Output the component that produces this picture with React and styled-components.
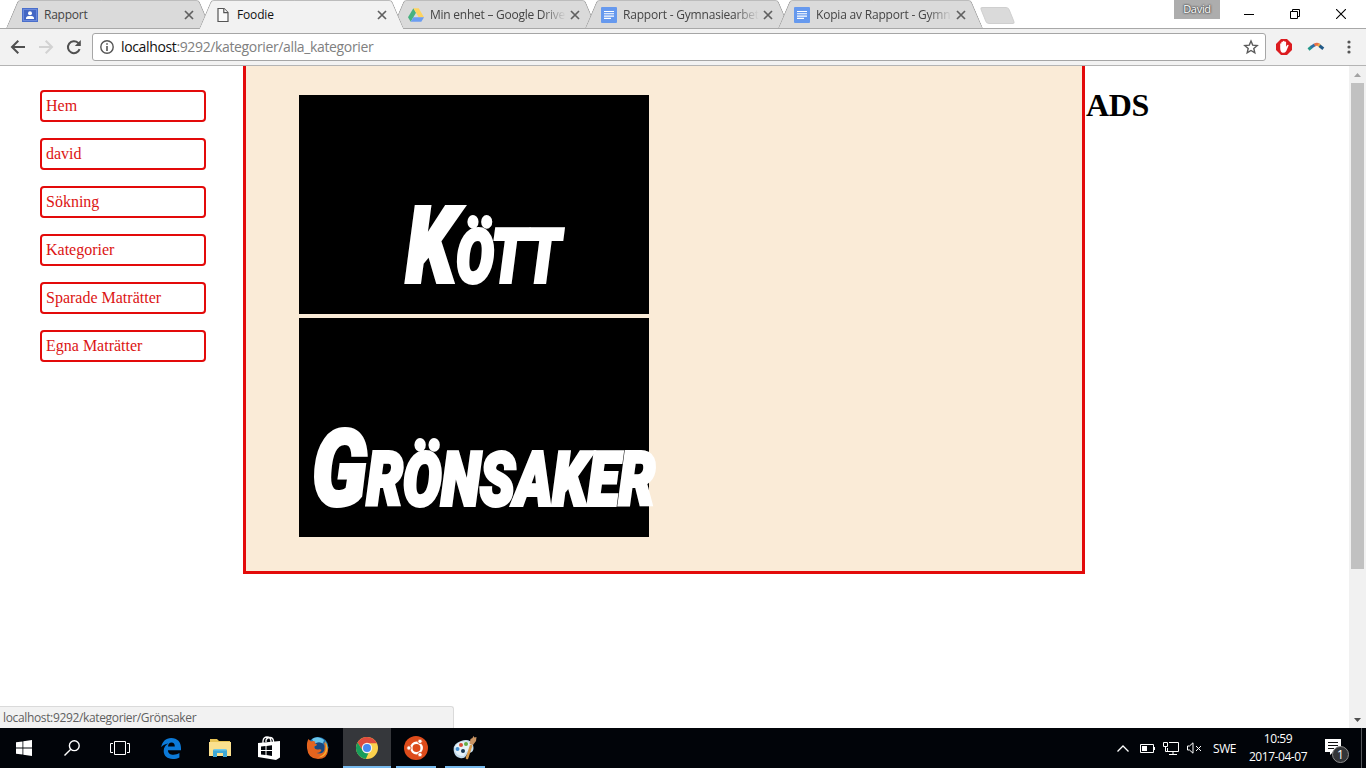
import React from "react";
import styled, { createGlobalStyle, css } from "styled-components";

const Global = createGlobalStyle`
  *, *::before, *::after { box-sizing: border-box; }
  html, body { margin: 0; padding: 0; background: #fff; overflow: hidden; }
  svg { display: block; flex: none; }
`;

const UI = `"Open Sans", "Noto Sans", sans-serif`;

const Screen = styled.div`
  width: 1366px;
  height: 768px;
  display: flex;
  flex-direction: column;
  font-family: ${UI};
  overflow: hidden;
`;

/* ---------- browser frame ---------- */

const TabStrip = styled.header`
  flex: none;
  height: 28px;
  display: flex;
  padding-left: 6px;
  background: #fff;
`;

const tabSide = css`
  content: "";
  position: absolute;
  top: 0;
  z-index: -1;
  width: 55%;
  height: ${(p) => (p.$active ? 29 : 28)}px;
  background: ${(p) => (p.$active ? "#f2f2f2" : "#dadada")};
  border-top: 1px solid #bcbcbc;
`;

const TabShape = styled.div`
  position: relative;
  isolation: isolate;
  z-index: ${(p) => (p.$active ? 3 : 1)};
  flex: none;
  width: 205px;
  height: 28px;
  margin-right: -12px;
  padding: 1px 17px 0 16px;
  display: flex;
  align-items: center;
  &::before {
    ${tabSide}
    left: 6px;
    border-left: 1px solid #a0a0a0;
    border-top-left-radius: 3px;
    transform: skewX(-23deg);
  }
  &::after {
    ${tabSide}
    right: 6px;
    width: 48%;
    border-right: 1px solid #a0a0a0;
    border-top-right-radius: 3px;
    transform: skewX(23deg);
  }
`;

const TabTitle = styled.span`
  flex: 1;
  min-width: 0;
  margin: 0 4px 0 6px;
  white-space: nowrap;
  font-size: 12px;
  line-height: 18px;
  letter-spacing: ${(p) => p.$spacing || 0}px;
  color: ${(p) => (p.$active ? "#111" : "#444")};
  ${(p) => p.$fade && css`
    mask-image: linear-gradient(to right, #000 82%, transparent 100%);
  `}
`;

const NewTab = styled.div`
  width: 29px;
  height: 17px;
  margin: 7px 0 0 12px;
  border: 1px solid #cfcfcf;
  border-radius: 3px;
  background: #dadada;
  transform: skewX(22deg);
`;

const WindowControls = styled.div`
  margin-left: auto;
  padding-right: 2px;
  display: flex;
  align-items: flex-start;
`;

const UserBadge = styled.div`
  width: 46px;
  height: 19px;
  margin-right: 6px;
  background: #adadad;
  color: #fff;
  font-size: 11px;
  line-height: 18px;
  text-align: center;
  letter-spacing: -0.3px;
  text-shadow: 0 0 2px #333, 0 0 2px #333;
`;

const ControlButton = styled.div`
  width: 46px;
  height: 27px;
  display: flex;
  align-items: center;
  justify-content: center;
`;

const Toolbar = styled.div`
  flex: none;
  height: 38px;
  display: flex;
  align-items: center;
  padding: 0 0 1px 10px;
  background: #f2f2f2;
  border-top: 1px solid #a8a8a8;
  border-bottom: 1px solid #b4b4b4;
`;

const NavIcons = styled.div`
  display: flex;
  width: 82px;
  gap: 12px;
`;

const AddressBar = styled.div`
  width: 1174px;
  height: 28px;
  display: flex;
  align-items: center;
  padding: 0 6px 0 7px;
  background: #fff;
  border: 1px solid #a6a6a6;
  border-radius: 3px;
`;

const Url = styled.div`
  flex: 1;
  padding-left: 7px;
  font-size: 14px;
  line-height: 20px;
  letter-spacing: -0.36px;
  color: #808080;
  b { font-weight: 400; color: #111; }
`;

const Extensions = styled.div`
  flex: 1;
  display: flex;
  align-items: center;
  padding-left: 10px;
  & > :nth-child(2) { margin: 0 22px 0 15px; }
`;

/* ---------- web page ---------- */

const Viewport = styled.div`
  flex: 1;
  min-height: 0;
  position: relative;
  display: flex;
  background: #fff;
  font-family: "Liberation Serif", serif;
`;

const Sidebar = styled.nav`
  width: 243px;
  padding: 24px 37px 0 40px;
  display: flex;
  flex-direction: column;
  gap: 16px;
`;

const NavItem = styled.a`
  height: 32px;
  padding: 0 4px;
  border: 2px solid #e30a0a;
  border-radius: 4px;
  color: #dc1414;
  font-size: 16px;
  line-height: 28px;
`;

const Content = styled.main`
  width: 842px;
  height: 508px;
  padding: 29px 53px 0;
  display: flex;
  flex-direction: column;
  gap: 4px;
  background: #faebd7;
  border: 3px solid #e30a0a;
  border-top: 0;
`;

const Category = styled.a`
  width: 350px;
  height: 219px;
  display: flex;
  align-items: flex-start;
  padding: ${(p) => p.$top}px 0 0 ${(p) => p.$left}px;
  background: #000;
`;

const CategoryName = styled.div`
  flex: none;
  font-family: Roboto, sans-serif;
  font-weight: 900;
  font-style: italic;
  font-size: 73px;
  line-height: 100px;
  text-transform: uppercase;
  white-space: nowrap;
  color: #fff;
  -webkit-text-stroke: 4px #fff;
  transform-origin: 0 0;
  transform: scaleX(${(p) => p.$scale});
  &::first-letter { font-size: 106px; line-height: 100px; }
`;

const Ads = styled.h1`
  flex: 1;
  margin: 21px 0 0 1px;
  font-size: 32px;
  line-height: 37px;
  letter-spacing: -0.3px;
  color: #000;
`;

const Scrollbar = styled.div`
  width: 17px;
  display: flex;
  flex-direction: column;
  align-items: center;
  background: #f1f1f1;
`;

const ScrollArrow = styled.div`
  height: 17px;
  display: flex;
  align-items: center;
`;

const Thumb = styled.div`
  width: 13px;
  height: 486px;
  margin-bottom: auto;
  background: #c1c1c1;
`;

const StatusBubble = styled.div`
  position: absolute;
  left: 0;
  bottom: 0;
  width: 454px;
  height: 22px;
  padding-left: 3px;
  background: #f2f2f2;
  border: 1px solid #dadada;
  border-width: 1px 1px 0 0;
  border-top-right-radius: 3px;
  color: #5f5f5f;
  font-family: ${UI};
  font-size: 12px;
  line-height: 22px;
  letter-spacing: -0.35px;
`;

/* ---------- taskbar ---------- */

const Taskbar = styled.footer`
  flex: none;
  height: 40px;
  display: flex;
  background: #010409;
  color: #fff;
`;

const SystemButtons = styled.div`
  display: flex;
  width: 147px;
`;

const Apps = styled.div`
  display: flex;
  gap: 1px;
`;

const TaskCell = styled.div`
  width: 48px;
  height: 40px;
  display: flex;
  align-items: center;
  justify-content: center;
  background:
    linear-gradient(#76b9ed, #76b9ed) bottom / ${(p) => (p.$running || 0)}px 2px no-repeat,
    ${(p) => (p.$focused ? "#35373b" : "transparent")};
`;

const Tray = styled.div`
  margin-left: auto;
  display: flex;
  align-items: center;
  font-size: 12px;
`;

const TrayIcons = styled.div`
  display: flex;
  align-items: center;
  gap: 8px;
  margin-right: 11px;
  & > :first-child { margin-right: 3px; }
`;

const Language = styled.div`
  width: 24px;
  white-space: nowrap;
  letter-spacing: -0.4px;
`;

const Clock = styled.div`
  width: 60px;
  margin: 0 16px 0 11px;
  text-align: center;
  line-height: 18px;
  letter-spacing: -0.45px;
  white-space: nowrap;
`;

const Notifications = styled.div`
  position: relative;
  width: 26px;
  height: 28px;
  padding: 5px 0 0 1px;
  margin-right: 11px;
`;

const Count = styled.div`
  position: absolute;
  left: 8px;
  top: 12px;
  width: 17px;
  height: 17px;
  border: 1px solid #8c8c8c;
  border-radius: 50%;
  background: #333538;
  font-size: 12px;
  line-height: 15px;
  text-align: center;
`;

const ShowDesktop = styled.div`
  width: 5px;
  height: 40px;
  border-left: 1px solid #54575b;
`;

/* ---------- icons ---------- */

const Classroom = () => (
  <svg width="16" height="14" viewBox="0 0 16 14">
    <path fill="#4a6fcb" d="M0 0h16v14H0z" />
    <path fill="#6c8adb" d="M1 1h14v12H1z" />
    <path fill="#4467c4" d="M2 2h12v10H2z" />
    <circle cx="8" cy="5.3" r="2" fill="#fff" />
    <path fill="#fff" d="M4 11V9.8C4 8.4 6.5 8 8 8s4 .4 4 1.8V11z" />
  </svg>
);
const FileIcon = () => (
  <svg width="16" height="16" viewBox="0 0 16 16" fill="#fafafa" stroke="#555" strokeWidth="1.2">
    <path d="M3 1.500h6l4 4v9H3z" />
    <path d="M8.800 1.500v4.200H13" />
  </svg>
);
const Drive = () => (
  <svg width="16" height="16" viewBox="0 0 16 16">
    <path fill="#47b27f" d="M5.4 1.2 0 10.3l2.7 4.5L8 5.7z" />
    <path fill="#ffd45f" d="M5.4 1.2h5.3l5.3 9.1h-5.3z" />
    <path fill="#6b9df2" d="M5.4 10.3H16l-2.7 4.5H2.7z" />
  </svg>
);
const Docs = () => (
  <svg width="16" height="16" viewBox="0 0 16 16">
    <rect width="16" height="16" rx="1" fill="#6699ee" />
    <path stroke="#fff" strokeWidth="1.1" d="M3 4.5h10M3 6.8h10M3 9.1h10M3 11.4h7" />
  </svg>
);
const TabClose = () => (
  <svg width="10" height="10" viewBox="0 0 10 10" stroke="#606060" strokeWidth="1.7">
    <path d="m1 1 8 8M9 1 1 9" />
  </svg>
);
const Arrow = ({ color, flip }) => (
  <svg width="16" height="16" viewBox="0 0 16 16" fill="none" stroke={color} strokeWidth="2">
    <path transform={flip ? "matrix(-1 0 0 1 16 0)" : undefined} d="M15 8H2.5M8.3 1.7 2 8l6.3 6.3" />
  </svg>
);
const Reload = () => (
  <svg width="16" height="16" viewBox="0 0 16 16">
    <path fill="none" stroke="#505050" strokeWidth="2" d="M13.6 10.2a6 6 0 1 1-1.4-6.3L13.6 5.3" />
    <path fill="#505050" d="M14.8 1v6H8.8z" />
  </svg>
);
const Info = () => (
  <svg width="14" height="14" viewBox="0 0 14 14">
    <circle cx="7" cy="7" r="6.2" fill="none" stroke="#555" strokeWidth="1.4" />
    <path fill="#555" d="M6.2 3.2h1.6v1.6H6.2zM6.2 6h1.6v5H6.2z" />
  </svg>
);
const Star = () => (
  <svg width="16" height="16" viewBox="0 0 16 16" fill="none" stroke="#5a5a5a" strokeWidth="1.4">
    <path d="m8 2 1.7 4.1 4.5.4-3.4 2.9 1 4.4L8 11.5l-3.8 2.3 1-4.4-3.4-2.9 4.5-.4z" />
  </svg>
);
const AdBlock = () => (
  <svg width="16" height="16" viewBox="0 0 16 16">
    <path fill="#dc1c20" d="M5 0h6l5 5v6l-5 5H5l-5-5V5z" />
    <path fill="#fff" d="M4.200 4.800q.6-.8 1.200-.3V3q.8-1 1.600 0v-.8q.8-.9 1.600 0V3q.8-.8 1.500.1v4.700l1.200-1.900q1.300-.6 1.300.6L10.300 12q-1.300 2.200-3.800 1.800Q4.200 13.200 4.200 9z" />
  </svg>
);
const Boomerang = () => (
  <svg width="18" height="12" viewBox="0 0 18 12" fill="none" strokeWidth="3">
    <path stroke="#23988a" d="M1.500 8.500 4.500 6" />
    <path stroke="#2c6da4" d="M4 6.300 8 3.800" />
    <path stroke="#e8714b" d="M7.500 4Q10 2.700 12 4" />
    <path stroke="#f0ac45" d="m11 3.600 2.200 1.500" />
    <path stroke="#225987" d="m12.500 4.700 3.800 3" />
  </svg>
);
const Dots = () => (
  <svg width="4" height="14" viewBox="0 0 4 14" fill="#555">
    <circle cx="2" cy="2" r="1.6" /><circle cx="2" cy="7" r="1.6" /><circle cx="2" cy="12" r="1.6" />
  </svg>
);
const Minimize = () => <svg width="10" height="10" viewBox="0 0 10 10"><path fill="#000" d="M0 5h10v1H0z" /></svg>;
const Restore = () => (
  <svg width="10" height="10" viewBox="0 0 10 10" fill="none" stroke="#000">
    <path d="M.5 2.500h7v7h-7zM2.500 2.500v-2h7v7h-2" />
  </svg>
);
const WinClose = () => <svg width="10" height="10" viewBox="0 0 10 10" stroke="#000" strokeWidth="1.1"><path d="m0 0 10 10M10 0 0 10" /></svg>;
const Triangle = ({ down }) => (
  <svg width="7" height="4" viewBox="0 0 7 4"><path fill={down ? "#505050" : "#a3a3a3"} d={down ? "M0 0h7L3.500 4z" : "M0 4h7L3.500 0z"} /></svg>
);
const Windows = () => (
  <svg width="16" height="16" viewBox="0 0 16 16" fill="#fff">
    <path d="M0 2.300 6.500 1.400v6.200H0zM7.300 1.300 16 0v7.600H7.300zM0 8.400h6.500v6.200L0 13.700zM7.300 8.400H16V16l-8.700-1.300z" />
  </svg>
);
const Search = () => (
  <svg width="16" height="16" viewBox="0 0 16 16" fill="none" stroke="#fff" strokeWidth="1.400">
    <circle cx="10.300" cy="5.700" r="4.900" /><path d="M6.800 9.200.5 15.500" />
  </svg>
);
const TaskView = () => (
  <svg width="20" height="14" viewBox="0 0 20 14" fill="none" stroke="#fff">
    <path d="M4.500.5h11v13h-11zM3 2.500H.5v9H3M17 2.500h2.500v9H17" />
  </svg>
);
const Edge = () => (
  <svg width="20" height="21" viewBox="0 0 20 21">
    <path fill="#0c7ad8" d="M.2 9.300C1 3.700 4.800 0 10.200 0 16.500 0 20 4.300 20 10v2.300H6.900c.1 3.200 2.500 4.500 5.500 4.500 2.300 0 4.200-.6 6-1.700v4.300C16.500 20.500 14.200 21 11.700 21 6.300 21 2.700 18 2.700 13.100c0-3.400 1.800-5.900 4.600-7.500C4.300 6 2 7.100.2 9.300zM7 8.400h6.800c0-2.300-1.100-3.800-3.300-3.800C8.600 4.600 7.200 6.100 7 8.400z" />
  </svg>
);
const Explorer = () => (
  <svg width="22" height="18" viewBox="0 0 22 18">
    <path fill="#e8c355" d="M1 0h7l2 2h11v3H1z" />
    <path fill="#fbe08e" d="M0 3h22v14H0z" />
    <path fill="#3fa9d6" d="M4 18v-6q0-2 2-2h10q2 0 2 2v6h-4v-4H8v4z" />
    <path fill="#6fc9ea" d="M5 10h12v1.500H5z" />
  </svg>
);
const Store = () => (
  <svg width="22" height="24" viewBox="0 0 22 24">
    <path fill="none" stroke="#fff" strokeWidth="1.300" d="M5 7V5q.5-4 4-4t4 4v1M8 6V4q1-2.500 4-2.500T15.500 5v1" />
    <path fill="#fff" d="m0 7 22-2v16.500L18 24 0 21z" />
    <path fill="#010409" d="m3 10.600 4.500-.5v4H3zM8.500 10l5.500-.7v4.800H8.500zM3 15h4.500v4L3 18.400zM8.500 15H14v4.900L8.500 19.100z" />
  </svg>
);
const Firefox = () => (
  <svg width="24" height="24" viewBox="0 0 24 24">
    <circle cx="12" cy="11.500" r="10.500" fill="#1f78b8" />
    <path fill="#6bc6ea" d="M6 3q6-4 12 1-1 5-5 4Q8 8 6 3z" />
    <path fill="#17487f" d="M10 7q5-2 8 2 2 5-2 8-6 2-8-3z" />
    <path fill="#e4641e" d="M1 12Q.5 6 2.500 3l2.500 2.500q2.500-1 4.500.5l-1 1.500q2.500 0 2.500 1.500-1.500 1-3 1.500.5 3.500 4.500 3 2-.4 3 .4-1 3-5 3 6 2 8-3 1-4-1-8 4 3 4.500 8Q21.500 23 12 23 2 23 1 12z" />
    <path fill="#f7b02e" d="M19 5q3.500 5 2 10-2 6-9 6.500 6-2 7.500-7 1-4-.5-9.500z" />
  </svg>
);
const Chrome = () => (
  <svg width="22" height="22" viewBox="0 0 22 22">
    <circle cx="11" cy="11" r="11" fill="#fbd04c" />
    <path fill="#de4b3e" d="M1.500 5.500A11 11 0 0 1 20.500 5.600L20.900 6.300H11L6.600 13.500z" />
    <path fill="#189d5b" d="M1.500 5.500 6.700 13.600Q9 17 12.500 16l-2.700 6A11 11 0 0 1 1.500 5.500z" />
    <circle cx="11" cy="11" r="5.200" fill="#f3f3f3" />
    <circle cx="11" cy="11" r="4" fill="#4688f1" />
  </svg>
);
const Ubuntu = () => (
  <svg width="24" height="24" viewBox="0 0 24 24">
    <circle cx="12" cy="12" r="12" fill="#dd4b1b" />
    <circle cx="12.500" cy="12" r="5.200" fill="none" stroke="#fff" strokeWidth="2.500" />
    <g fill="#fff" stroke="#dd4b1b" strokeWidth=".9">
      <circle cx="4.900" cy="12" r="2.200" /><circle cx="16" cy="5.300" r="2.200" /><circle cx="16" cy="18.700" r="2.200" />
    </g>
  </svg>
);
const Paint = () => (
  <svg width="24" height="24" viewBox="0 0 24 24">
    <path fill="#c4dcec" d="M1 16Q-1 8 8 5q9-3 12 4 2 7-4 8-2 0-3 3-2 3-6 2-5-1-6-6z" />
    <path fill="#e6f2f8" d="M2 14Q1 8 8 6q8-2 11 3 1 5-4 6-3 1-4 5Q3 20 2 14z" />
    <circle cx="4.500" cy="13" r="2" fill="#4590d1" /><circle cx="8" cy="9" r="2" fill="#d74e38" />
    <circle cx="13" cy="8" r="2" fill="#64ad46" /><circle cx="10" cy="15" r="2" fill="#173651" />
    <path stroke="#d89a4c" strokeWidth="2.600" strokeLinecap="round" d="m14 22 4-12" />
    <path fill="#c99463" d="m16.500 8 1-5 2-1 .8-2 1.200 1.500L23.500 1 23 5l-3 4z" />
  </svg>
);
const Chevron = () => <svg width="12" height="7" viewBox="0 0 12 7" fill="none" stroke="#fff" strokeWidth="1.300"><path d="m.5 6.500 5.500-5.500 5.500 5.500" /></svg>;
const Battery = () => (
  <svg width="15" height="9" viewBox="0 0 15 9" fill="none" stroke="#fff"><path d="M.5.5h13v8H.5z" /><path fill="#fff" stroke="none" d="M2 2h5v5H2zM14 3h1v3h-1z" /></svg>
);
const Network = () => (
  <svg width="16" height="13" viewBox="0 0 16 13" fill="none" stroke="#fff"><path d="M6 .5h9.500v9h-11V6M.5.500h4v4h-4zM2.500 4.500v5H5M10 9.500v3M6 12.500h8" /></svg>
);
const Mute = () => (
  <svg width="15" height="12" viewBox="0 0 15 12" fill="none" stroke="#fff"><path d="M.5 4h2L6 .8v10.400L2.500 8h-2zM9 4l5 5M14 4 9 9" /></svg>
);
const Message = () => (
  <svg width="16" height="16" viewBox="0 0 16 16"><path fill="#fff" d="M0 0h16v13H8l-3 3v-3H0z" /><path stroke="#111" d="M3 3.500h10M3 6.500h10M3 9.500h6" /></svg>
);

const tabs = [
  { title: "Rapport", icon: <Classroom />, spacing: -0.25 },
  { title: "Foodie", icon: <FileIcon />, active: true, spacing: -0.15 },
  { title: "Min enhet – Google Drive", icon: <Drive />, fade: true, spacing: -0.25 },
  { title: "Rapport - Gymnasiearbet", icon: <Docs />, fade: true, spacing: -0.2 },
  { title: "Kopia av Rapport - Gymn", icon: <Docs />, fade: true, spacing: -0.2 },
];

const links = ["Hem", "david", "Sökning", "Kategorier", "Sparade Maträtter", "Egna Maträtter"];

export default function App() {
  return (
    <Screen>
      <Global />
      <TabStrip>
        {tabs.map((t) => (
          <TabShape key={t.title} $active={t.active}>
            {t.icon}
            <TabTitle $active={t.active} $fade={t.fade} $spacing={t.spacing}>{t.title}</TabTitle>
            <TabClose />
          </TabShape>
        ))}
        <NewTab />
        <WindowControls>
          <UserBadge>David</UserBadge>
          <ControlButton><Minimize /></ControlButton>
          <ControlButton><Restore /></ControlButton>
          <ControlButton><WinClose /></ControlButton>
        </WindowControls>
      </TabStrip>
      <Toolbar>
        <NavIcons>
          <Arrow color="#505050" />
          <Arrow color="#d2d2d2" flip />
          <Reload />
        </NavIcons>
        <AddressBar>
          <Info />
          <Url><b>localhost</b>:9292/kategorier/alla_kategorier</Url>
          <Star />
        </AddressBar>
        <Extensions>
          <AdBlock />
          <Boomerang />
          <Dots />
        </Extensions>
      </Toolbar>
      <Viewport>
        <Sidebar>
          {links.map((l) => <NavItem key={l}>{l}</NavItem>)}
        </Sidebar>
        <Content>
          <Category $top={101} $left={107}><CategoryName $scale={0.765}>Kött</CategoryName></Category>
          <Category $top={101} $left={13}><CategoryName $scale={0.782}>Grönsaker</CategoryName></Category>
        </Content>
        <Ads>ADS</Ads>
        <Scrollbar>
          <ScrollArrow><Triangle /></ScrollArrow>
          <Thumb />
          <ScrollArrow><Triangle down /></ScrollArrow>
        </Scrollbar>
        <StatusBubble>localhost:9292/kategorier/Grönsaker</StatusBubble>
      </Viewport>
      <Taskbar>
        <SystemButtons>
          <TaskCell><Windows /></TaskCell>
          <TaskCell><Search /></TaskCell>
          <TaskCell><TaskView /></TaskCell>
        </SystemButtons>
        <Apps>
          <TaskCell><Edge /></TaskCell>
          <TaskCell><Explorer /></TaskCell>
          <TaskCell><Store /></TaskCell>
          <TaskCell><Firefox /></TaskCell>
          <TaskCell $focused $running={48}><Chrome /></TaskCell>
          <TaskCell $running={40}><Ubuntu /></TaskCell>
          <TaskCell $running={40}><Paint /></TaskCell>
        </Apps>
        <Tray>
          <TrayIcons><Chevron /><Battery /><Network /><Mute /></TrayIcons>
          <Language>SWE</Language>
          <Clock>10:59<br />2017-04-07</Clock>
          <Notifications><Message /><Count>1</Count></Notifications>
          <ShowDesktop />
        </Tray>
      </Taskbar>
    </Screen>
  );
}
